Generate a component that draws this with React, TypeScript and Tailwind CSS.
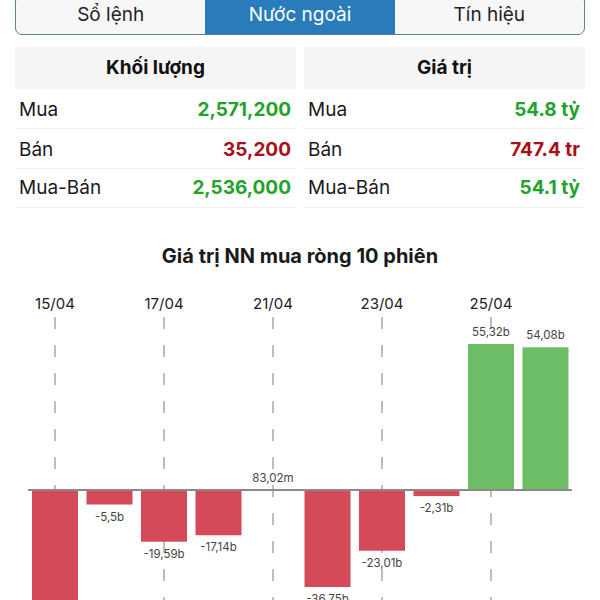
import React from 'react'

const tabs = ['Sổ lệnh', 'Nước ngoài', 'Tín hiệu']

const volRows = [
  { label: 'Mua', value: '2,571,200', up: true },
  { label: 'Bán', value: '35,200', up: false },
  { label: 'Mua-Bán', value: '2,536,000', up: true },
]

const valRows = [
  { label: 'Mua', value: '54.8 tỷ', up: true },
  { label: 'Bán', value: '747.4 tr', up: false },
  { label: 'Mua-Bán', value: '54.1 tỷ', up: true },
]

// net foreign value per session, in billions
const bars = [
  { v: -52.4, label: '-52,4b' },
  { v: -5.5, label: '-5,5b' },
  { v: -19.59, label: '-19,59b' },
  { v: -17.14, label: '-17,14b' },
  { v: 0.083, label: '83,02m' },
  { v: -36.75, label: '-36,75b' },
  { v: -23.01, label: '-23,01b' },
  { v: -2.31, label: '-2,31b' },
  { v: 55.32, label: '55,32b' },
  { v: 54.08, label: '54,08b' },
]

const dates = ['15/04', '17/04', '21/04', '23/04', '25/04']

function StatTable({ title, rows }: { title: string; rows: typeof volRows }) {
  return (
    <div className="flex flex-col">
      <div className="h-[42px] bg-[#f5f5f5] flex items-center justify-center text-[19px] font-bold text-[#111]">
        {title}
      </div>
      {rows.map((r, i) => (
        <div
          key={r.label}
          className={'flex items-center justify-between pl-[4px] pr-[5px] border-b border-[#f0f0f0] ' + (i === 2 ? 'h-[39px] pt-[1px]' : 'h-[40px] pt-[4px]')}
        >
          <span className="text-[19px] text-[#1a1a1a]">{r.label}</span>
          <span className={'text-[19px] font-bold ' + (r.up ? 'text-[#1fa32a]' : 'text-[#a7101b]')}>{r.value}</span>
        </div>
      ))}
    </div>
  )
}

function Chart() {
  const zeroY = 490
  const k = 146 / 55.32
  const cx = (i: number) => 55 + i * 54.5

  return (
    <svg width="600" height="330" viewBox="0 270 600 330" className="block">
      {/* date axis + dashed guides */}
      {dates.map((d, j) => {
        const x = cx(j * 2)
        return (
          <g key={d}>
            <text x={x} y={309} textAnchor="middle" fontSize="15" fill="#222" fontFamily="Inter, sans-serif">{d}</text>
            <line x1={x} y1={317} x2={x} y2={600} stroke="#9a9a9a" strokeWidth="1.3" strokeDasharray="12 16" />
          </g>
        )
      })}

      {/* bars */}
      {bars.map((b, i) => {
        const h = Math.abs(b.v) * k
        const x = cx(i) - 23
        const pos = b.v >= 0
        const y = pos ? zeroY - h : zeroY
        const ly = pos ? zeroY - h - 8 : zeroY + h + 16
        return (
          <g key={i}>
            {h > 0.5 && <rect x={x} y={y} width={46} height={h} fill={pos ? '#6dbd67' : '#d44a59'} />}
            <text x={cx(i)} y={ly} textAnchor="middle" fontSize="11.5" fill="#444" fontFamily="Inter, sans-serif">{b.label}</text>
          </g>
        )
      })}

      {/* zero line */}
      <line x1={28} y1={zeroY} x2={572} y2={zeroY} stroke="#8a8a8a" strokeWidth="2" />
    </svg>
  )
}

export default function App() {
  return (
    <div className="w-[600px] h-[600px] overflow-hidden bg-white font-['Inter',sans-serif]">
      {/* Tabs */}
      <div className="mx-[15px] -mt-[6px] h-[41px] flex border-[1.5px] border-[#5f7f93] rounded-[7px] overflow-hidden bg-[#f7f7f7]">
        {tabs.map((t, i) => (
          <div
            key={t}
            className={'flex-1 flex items-center justify-center pt-[2px] text-[19px] ' + (i === 1 ? 'bg-[#2a7bba] text-white' : 'text-[#222]')}
          >
            {t}
          </div>
        ))}
      </div>

      {/* Stats */}
      <div className="mx-[15px] mt-[12px] grid grid-cols-2 gap-[8px]">
        <StatTable title="Khối lượng" rows={volRows} />
        <StatTable title="Giá trị" rows={valRows} />
      </div>

      {/* Chart title */}
      <div className="mt-[34px] text-center text-[20px] font-bold text-[#1a1a1a] leading-[28px]">
        Giá trị NN mua ròng 10 phiên
      </div>

      <Chart />
    </div>
  )
}
